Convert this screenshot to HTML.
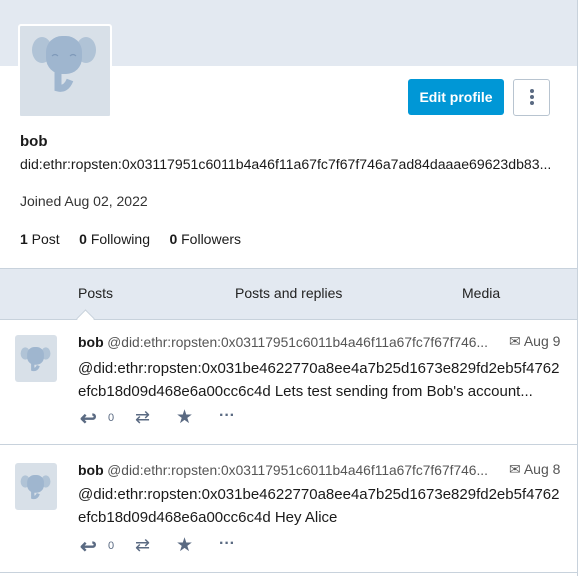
<!DOCTYPE html><html><head><style>
body{margin:0;width:580px;height:576px;background:#fff;font-family:"Liberation Sans",Arial,sans-serif;color:#1a1a1a;position:relative;overflow:hidden}
.a{position:absolute}
.el{background:#d8e0e8}
.ic{position:absolute;color:#5a6a82}
</style></head><body>
<div class="a" style="left:0;top:0;width:578px;height:66px;background:#e3e9f1"></div>
<div class="a" style="left:577px;top:0;width:1px;height:576px;background:#c8d2dc"></div>
<div class="a el" style="left:18px;top:24px;width:90px;height:90px;border:2px solid #fff;border-radius:3px">
<svg width="90" height="90" viewBox="0 0 90 90"><ellipse cx="22" cy="24" rx="10" ry="13" fill="#b0c3d6"/><ellipse cx="66" cy="24" rx="10" ry="13" fill="#b0c3d6"/><rect x="26" y="10" width="36" height="38" rx="16" fill="#9fb6cf"/><path d="M38 44v18q8 2 12-8" fill="none" stroke="#9fb6cf" stroke-width="7"/><path d="M32 30q3-3 6 0M50 30q3-3 6 0" stroke="#7f9aba" fill="none" stroke-width="1.2"/></svg></div>
<div class="a" style="left:408px;top:79px;width:96px;height:36px;background:#0097d6;border-radius:3px;color:#fff;font-weight:bold;font-size:14px;text-align:center;line-height:36px">Edit profile</div>
<div class="a" style="left:513px;top:79px;width:35px;height:35px;border:1px solid #b8c4d0;border-radius:3px"><div class="a" style="left:16px;top:9px;width:4px;height:4px;border-radius:2px;background:#5a6a82;box-shadow:0 6px 0 #5a6a82,0 12px 0 #5a6a82"></div></div>
<div class="a" style="left:20px;top:133px;font-weight:bold;font-size:15px">bob</div>
<div class="a" style="left:20px;top:156px;font-size:14.1px;white-space:nowrap">did:ethr:ropsten:0x03117951c6011b4a46f11a67fc7f67f746a7ad84daaae69623db83...</div>
<div class="a" style="left:20px;top:193px;font-size:14px;color:#333">Joined Aug 02, 2022</div>
<div class="a" style="left:20px;top:231px;font-size:14px"><b>1</b> Post &nbsp;&nbsp;&nbsp;&nbsp;<b>0</b> Following &nbsp;&nbsp;&nbsp;&nbsp;<b>0</b> Followers</div>
<div class="a" style="left:0;top:268px;width:577px;height:50px;background:#e3e9f1;border-top:1px solid #c8d2dc;border-bottom:1px solid #c8d2dc"></div>
<div class="a" style="left:78px;top:285px;font-size:14px;color:#222">Posts</div>
<div class="a" style="left:235px;top:285px;font-size:14px;color:#222">Posts and replies</div>
<div class="a" style="left:462px;top:285px;font-size:14px;color:#222">Media</div>
<div class="a" style="left:79px;top:312px;width:12px;height:12px;background:#fff;border-left:1px solid #c8d2dc;border-top:1px solid #c8d2dc;transform:rotate(45deg)"></div>
<div class="a" style="left:0;top:444px;width:577px;height:1px;background:#c8d2dc"></div>
<div class="a" style="left:0;top:572px;width:577px;height:1px;background:#c8d2dc"></div>

<div class="a el" style="left:15px;top:335px;width:42px;height:47px;border-radius:3px"><svg width="42" height="47" viewBox="0 0 90 90" style="margin-top:2px"><ellipse cx="22" cy="30" rx="10" ry="13" fill="#b0c3d6"/><ellipse cx="66" cy="30" rx="10" ry="13" fill="#b0c3d6"/><rect x="26" y="16" width="36" height="38" rx="16" fill="#9fb6cf"/><path d="M38 50v14q8 2 12-8" fill="none" stroke="#9fb6cf" stroke-width="7"/></svg></div>
<div class="a" style="left:78px;top:334px;font-size:13px;white-space:nowrap"><b style="font-size:14px">bob</b> <span style="color:#555;font-size:13.8px">@did:ethr:ropsten:0x03117951c6011b4a46f11a67fc7f67f746...</span></div>
<div class="a" style="left:509px;top:333px;font-size:14px;color:#555">✉ Aug 9</div>
<div class="a" style="left:78px;top:357px;font-size:15px;line-height:23px;white-space:nowrap">@did:ethr:ropsten:0x031be4622770a8ee4a7b25d1673e829fd2eb5f4762<br>efcb18d09d468e6a00cc6c4d Lets test sending from Bob's account...</div>
<div class="ic" style="left:80px;top:406px;font-size:20px;font-weight:bold">↩</div><div class="ic" style="left:108px;top:412px;font-size:11px">0</div>
<div class="ic" style="left:135px;top:407px;font-size:18px">⇄</div><div class="ic" style="left:176px;top:406px;font-size:19px">★</div><div class="ic" style="left:219px;top:407px;font-size:16px;font-weight:bold">···</div>

<div class="a el" style="left:15px;top:463px;width:42px;height:47px;border-radius:3px"><svg width="42" height="47" viewBox="0 0 90 90" style="margin-top:2px"><ellipse cx="22" cy="30" rx="10" ry="13" fill="#b0c3d6"/><ellipse cx="66" cy="30" rx="10" ry="13" fill="#b0c3d6"/><rect x="26" y="16" width="36" height="38" rx="16" fill="#9fb6cf"/><path d="M38 50v14q8 2 12-8" fill="none" stroke="#9fb6cf" stroke-width="7"/></svg></div>
<div class="a" style="left:78px;top:462px;font-size:13px;white-space:nowrap"><b style="font-size:14px">bob</b> <span style="color:#555;font-size:13.8px">@did:ethr:ropsten:0x03117951c6011b4a46f11a67fc7f67f746...</span></div>
<div class="a" style="left:509px;top:461px;font-size:14px;color:#555">✉ Aug 8</div>
<div class="a" style="left:78px;top:483px;font-size:15px;line-height:23px;white-space:nowrap">@did:ethr:ropsten:0x031be4622770a8ee4a7b25d1673e829fd2eb5f4762<br>efcb18d09d468e6a00cc6c4d Hey Alice</div>
<div class="ic" style="left:80px;top:534px;font-size:20px;font-weight:bold">↩</div><div class="ic" style="left:108px;top:540px;font-size:11px">0</div>
<div class="ic" style="left:135px;top:535px;font-size:18px">⇄</div><div class="ic" style="left:176px;top:534px;font-size:19px">★</div><div class="ic" style="left:219px;top:535px;font-size:16px;font-weight:bold">···</div>
</body></html>
